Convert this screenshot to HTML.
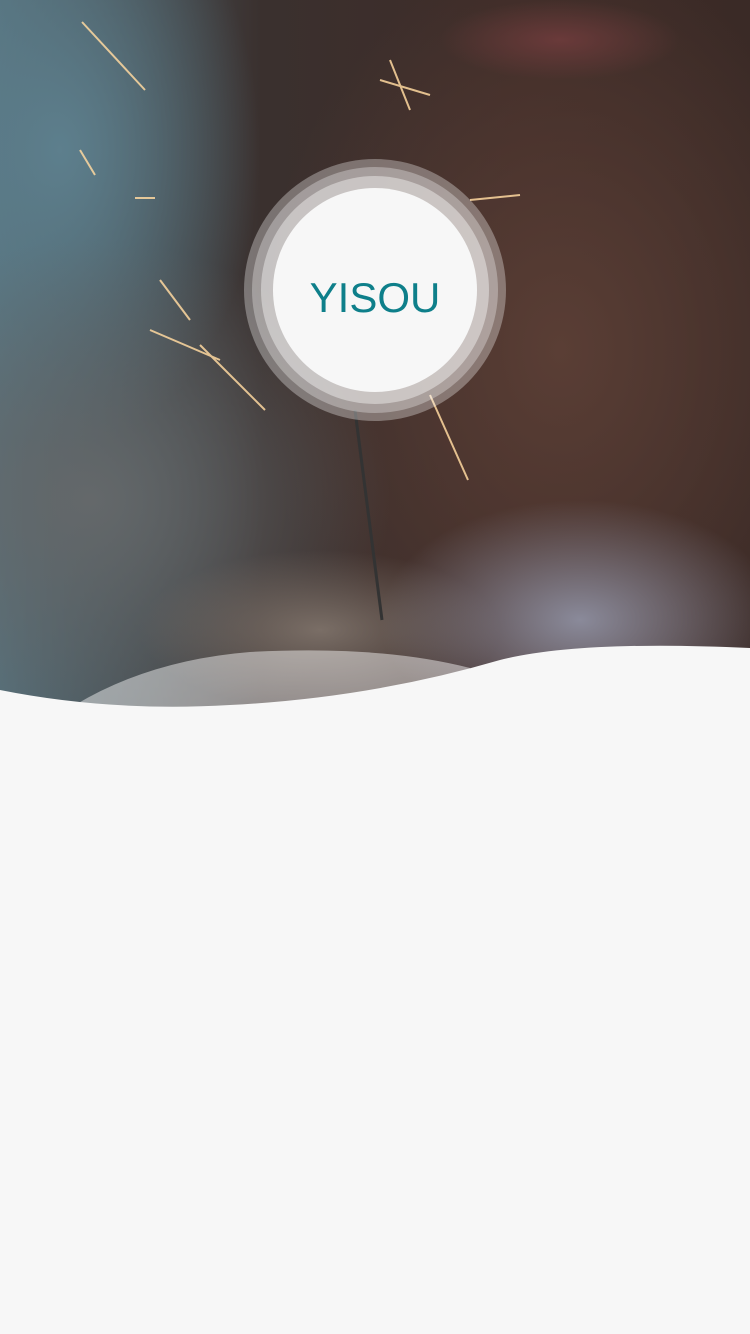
<!DOCTYPE html>
<html><head><meta charset="utf-8"><style>
html,body{margin:0;padding:0}
body{width:750px;height:1334px;background:#f7f7f7;position:relative;overflow:hidden;font-family:"Liberation Sans",sans-serif}
.bg{position:absolute;left:0;top:0;width:750px;height:720px;
background:
radial-gradient(ellipse 120px 40px at 560px 40px,#6a3a3a 0%,rgba(90,50,45,0) 100%),
radial-gradient(ellipse 200px 120px at 580px 620px,#8a8a9a 0%,rgba(138,138,154,0) 100%),
radial-gradient(ellipse 180px 80px at 320px 630px,#7a6e66 0%,rgba(122,110,102,0) 100%),
radial-gradient(ellipse 300px 260px at 90px 500px,#64686a 0%,rgba(100,104,106,0) 100%),
radial-gradient(ellipse 200px 300px at 60px 150px,#5d7f8d 0%,rgba(93,127,141,0) 100%),
radial-gradient(ellipse 300px 400px at 560px 350px,#5a3e35 0%,rgba(90,62,53,0) 100%),
linear-gradient(90deg,#55707b 0%,#3a302e 35%,#3f2c28 70%,#3a2a26 100%);}
.ring{position:absolute;border-radius:50%;left:50%;top:50%;transform:translate(-50%,-50%)}
.logo{position:absolute;left:375px;top:290px;width:0;height:0}
</style></head><body>
<div class="bg"></div>
<svg style="position:absolute;left:0;top:0" width="750" height="720">
<g stroke="#ffd9a0" stroke-width="2" opacity=".85">
<line x1="82" y1="22" x2="145" y2="90"/>
<line x1="160" y1="280" x2="190" y2="320"/>
<line x1="200" y1="345" x2="265" y2="410"/>
<line x1="430" y1="395" x2="468" y2="480"/>
<line x1="390" y1="60" x2="410" y2="110"/>
<line x1="380" y1="80" x2="430" y2="95"/>
<line x1="470" y1="200" x2="520" y2="195"/>
<line x1="150" y1="330" x2="220" y2="360"/>
<line x1="80" y1="150" x2="95" y2="175"/>
<line x1="135" y1="198" x2="155" y2="198"/>
</g>
<line x1="355" y1="410" x2="382" y2="620" stroke="#333" stroke-width="3"/>
<path d="M75 705 Q150 660 250 652 Q380 645 470 668 L470 720 L75 720Z" fill="rgba(255,255,255,.45)"/>
<path d="M0 690 Q110 712 230 705 Q370 698 500 660 Q580 640 750 648 L750 720 L0 720Z" fill="#f7f7f7"/>
</svg>
<div class="logo">
<div class="ring" style="width:262px;height:262px;background:rgba(255,255,255,.32)"></div>
<div class="ring" style="width:246px;height:246px;background:rgba(255,255,255,.3)"></div>
<div class="ring" style="width:228px;height:228px;background:rgba(255,255,255,.4)"></div>
<div class="ring" style="width:204px;height:204px;background:#f7f7f7"></div>
<div style="position:absolute;left:-120px;top:-22px;width:240px;text-align:center;font-size:42px;line-height:60px;color:#0e7f8a">YISOU</div>
</div>
</body></html>
